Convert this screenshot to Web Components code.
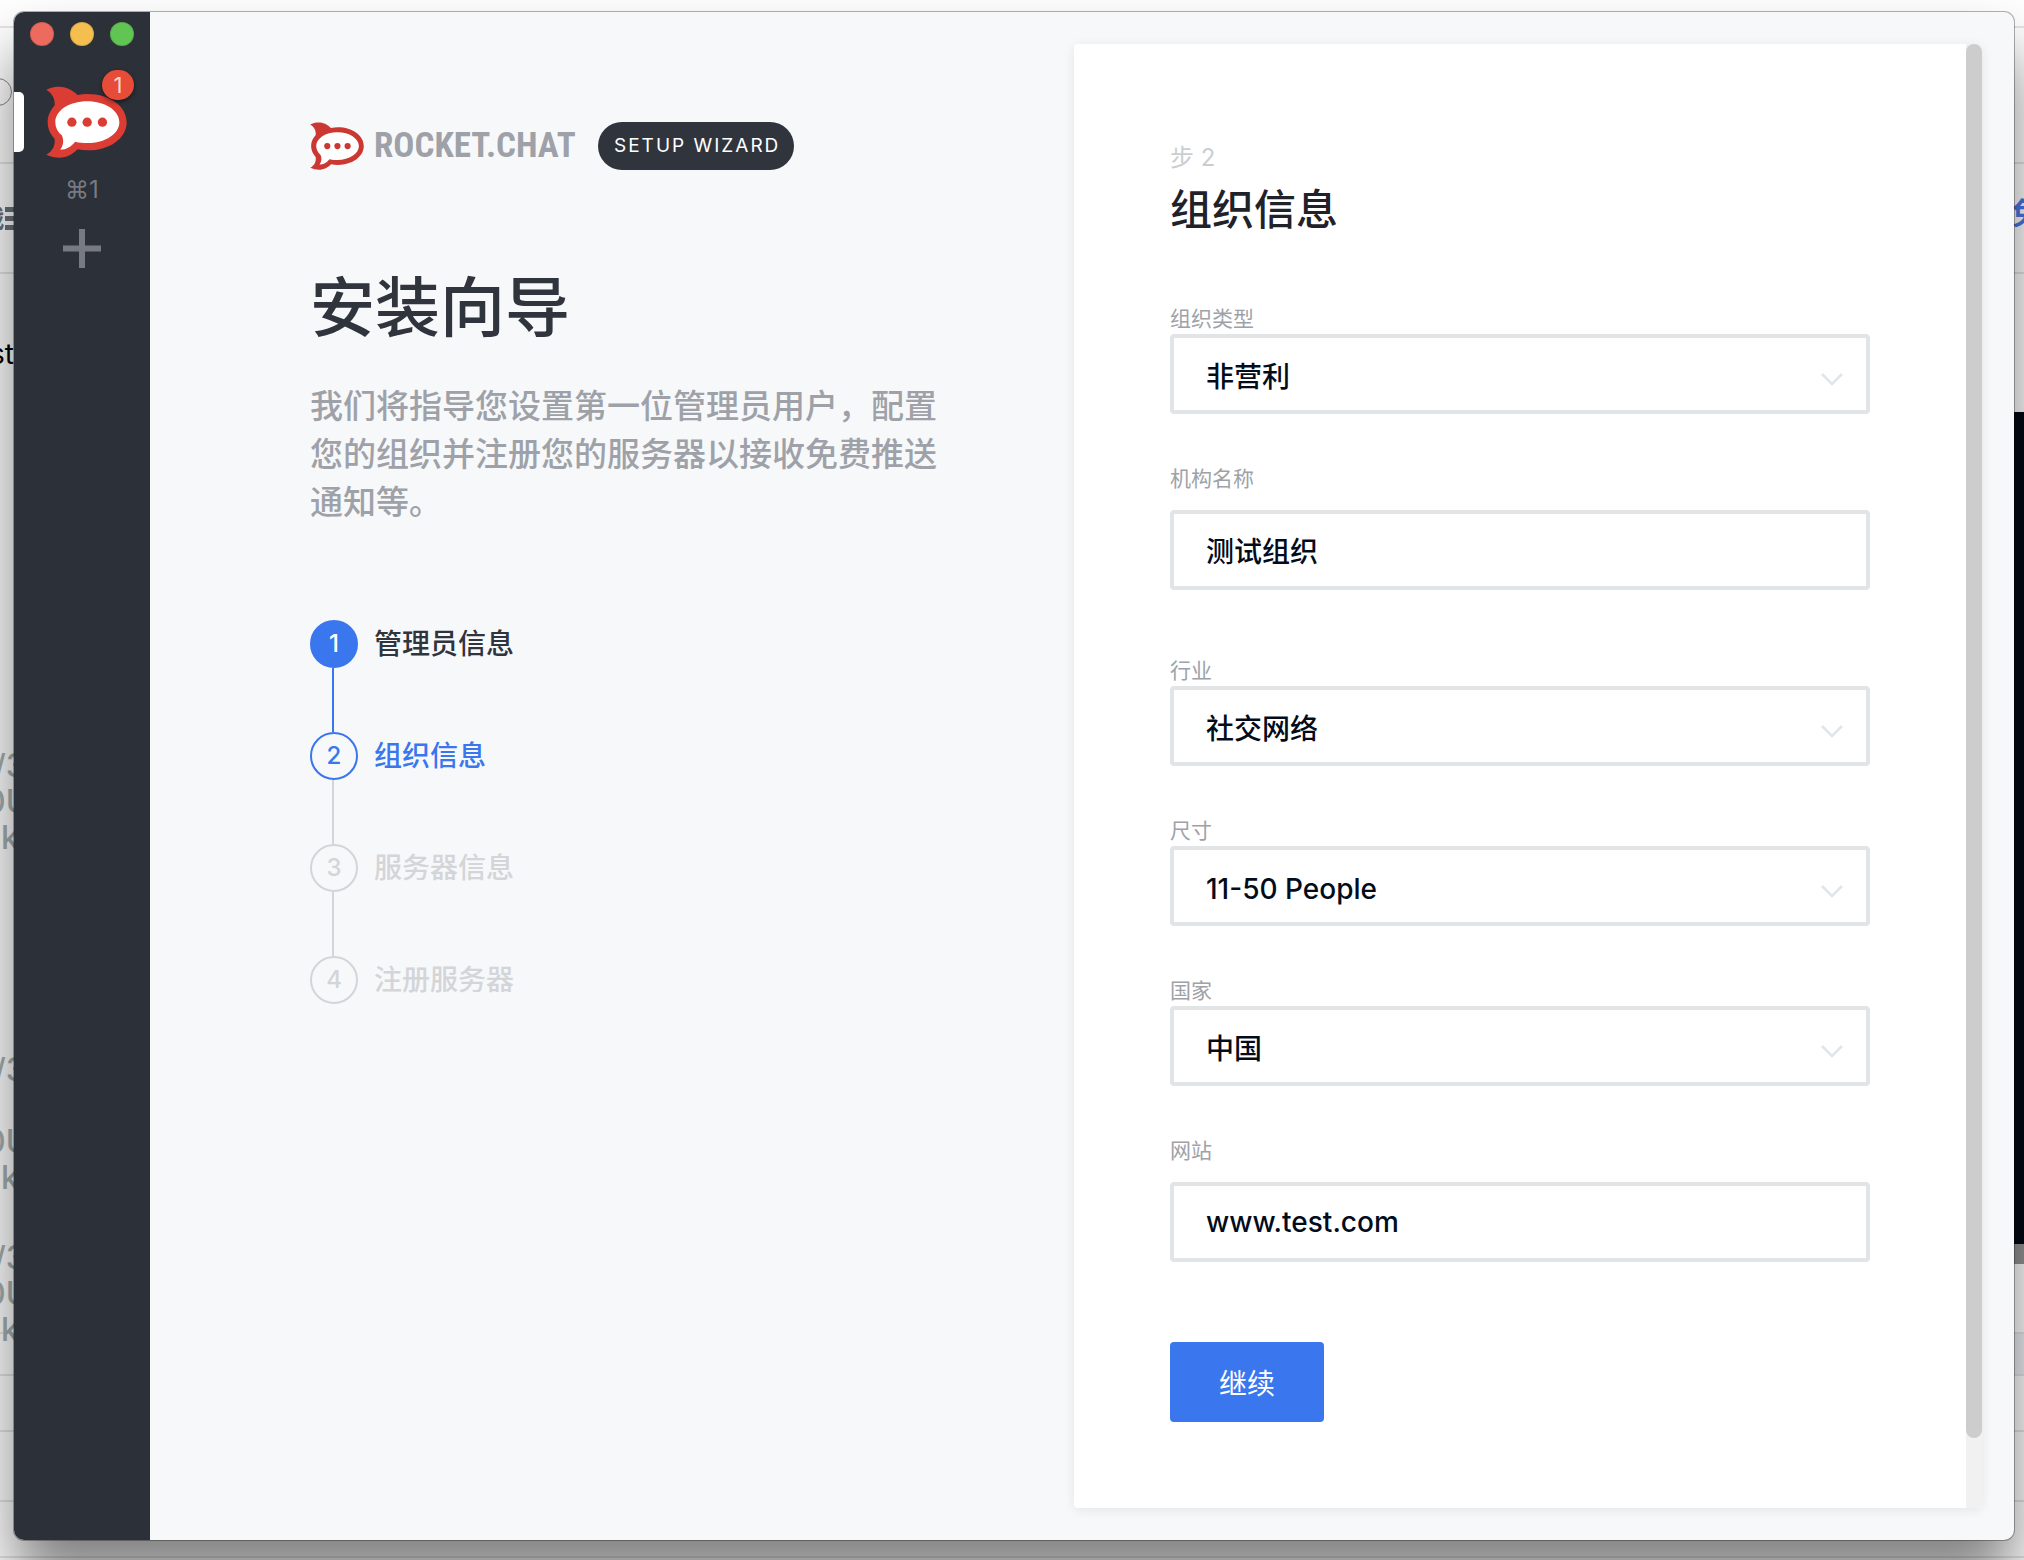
<!DOCTYPE html>
<html lang="zh-CN">
<head>
<meta charset="utf-8">
<title>Rocket.Chat</title>
<style>
  body { margin: 0; background: #fff; font-family: Inter, "Noto Sans CJK SC", sans-serif; color: #2f343d; }
</style>
</head>
<body>
<desktop-scene>
  <app-window>
    <server-bar slot="side"></server-bar>
    <wizard-intro></wizard-intro>
    <wizard-card></wizard-card>
  </app-window>
</desktop-scene>

<script>
const define = (name, html) => customElements.define(name, class extends HTMLElement {
  connectedCallback() {
    if (this.shadowRoot) return;
    const t = document.createElement('template');
    t.innerHTML = typeof html === 'function' ? html(this) : html;
    this.attachShadow({ mode: 'open' }).append(t.content.cloneNode(true));
  }
});

/* Desktop with whatever page lies behind the window */
define('desktop-scene', `
<style>
  :host { display: flex; position: relative; overflow: hidden; box-sizing: border-box; min-height: 100vh; padding: 12px 10px 20px 14px; isolation: isolate; }
  .behind { position: absolute; inset: 0; z-index: -1; overflow: hidden; }
  .behind * { position: absolute; white-space: nowrap; }
  hr { left: 0; right: 0; height: 2px; margin: 0; border: 0; background: rgba(0,0,0,.1); }
  .note { color: #a6b0b0; font-size: 32px; line-height: 36px; font-weight: 500; }
  .dark { right: 0; width: 100px; top: 412px; height: 832px; background: #030812; }
  .band { right: 0; width: 100px; top: 1244px; height: 20px; background: #949494; }
  .tint { right: 0; width: 100px; top: 1334px; height: 40px; background: #eff0f5; }
  .ring { left: -16px; top: 78px; width: 26px; height: 26px; border: 1px solid #888; border-radius: 14px; }
  .bars { left: 5px; top: 207px; width: 20px; height: 5px; background: #69727c; box-shadow: 0 9px #69727c, 0 18px #69727c; }
  .glyph { left: -20px; top: 201px; font-size: 24px; line-height: 36px; font-weight: 700; color: #69727c; }
  .st { left: -10px; top: 336px; font-size: 28px; line-height: 36px; color: #000; }
  .free { left: calc(100% - 12px); top: 193px; font-size: 30px; line-height: 40px; font-weight: 700; color: #4a78e8; }
  ::slotted(*) { flex: 1; min-width: 0; }
</style>
<div class="behind" aria-hidden="true">
  <hr style="top:26px"><hr style="top:162px"><hr style="top:272px">
  <hr style="top:1332px"><hr style="top:1374px"><hr style="top:1430px"><hr style="top:1500px"><hr style="top:1556px">
  <i class="ring"></i><i class="bars"></i>
  <span class="glyph">战</span><span class="st">st</span>
  <span class="note" style="left:-6px;top:748px">/3</span>
  <span class="note" style="left:-15px;top:784px">0U</span>
  <span class="note" style="left:1px;top:820px">k</span>
  <span class="note" style="left:-6px;top:1052px">/3</span>
  <span class="note" style="left:-15px;top:1124px">0U</span>
  <span class="note" style="left:1px;top:1160px">k</span>
  <span class="note" style="left:-6px;top:1240px">/3</span>
  <span class="note" style="left:-15px;top:1276px">0U</span>
  <span class="note" style="left:1px;top:1312px">k</span>
  <span class="free">免</span>
  <i class="dark"></i><i class="band"></i><i class="tint"></i>
</div>
<slot></slot>`);

define('app-window', `
<style>
  :host { display: flex; border-radius: 10px; background: #f7f8fa; box-shadow: 0 0 0 1px rgba(0,0,0,.3), 0 40px 60px rgba(0,0,0,.5); }
  main { flex: 1; min-width: 0; display: flex; padding: 32px 32px 32px 0; }
</style>
<slot name="side"></slot>
<main><slot></slot></main>`);

define('rocket-mark', `
<style>
  :host { display: block; color: #db3c34; }
  svg { display: block; width: 100%; height: 100%; }
</style>
<svg viewBox="136 257 244 217" preserveAspectRatio="none" aria-hidden="true">
  <path fill="currentColor" d="M137 268C152 260 166 259 176 259C200 259 216 270 231 284C242 282 252 281 262 281C328 281 379 318 379 366C379 414 328 451 262 451C252 451 242 450 231 448C217 462 200 473 176 473C163 473 150 470 137 464C156 453 164 437 162 416C149 402 141 385 141 366C141 347 149 330 162 316C164 296 155 279 137 268Z"/>
  <path fill="#fff" d="M260 303C314 303 357 331 357 366C357 401 314 429 260 429C248 429 236 428 224 425C212 440 197 449 179 449C189 435 190 421 184 406C171 395 164 382 164 366C164 331 206 303 260 303Z"/>
  <g fill="currentColor"><circle cx="214" cy="366" r="14"/><circle cx="260" cy="366" r="14"/><circle cx="306" cy="366" r="14"/></g>
</svg>`);

define('server-bar', `
<style>
  :host { display: flex; flex-direction: column; align-items: center; flex: none; width: 136px; box-sizing: border-box; padding-top: 10px; background: #2c3038; border-radius: 10px 0 0 10px; color: #777a80; }
  .lights { display: flex; gap: 16px; align-self: flex-start; margin-left: 16px; }
  .lights i { width: 24px; height: 24px; border-radius: 50%; box-shadow: inset 0 0 0 1px rgba(0,0,0,.12); }
  .server { display: flex; justify-content: center; position: relative; width: 100%; margin-top: 40px; padding: 0; border: 0; background: none; }
  .server::before { content: ""; position: absolute; left: 0; top: 6px; width: 10px; height: 60px; border-radius: 0 5px 5px 0; background: #fff; }
  rocket-mark { width: 81px; height: 72px; margin-left: 8px; }
  .badge { position: absolute; left: 88px; top: -16px; width: 32px; height: 30px; border-radius: 15px; background: #e74c38; color: #fbd3cf; font: 22px/30px Inter, sans-serif; text-align: center; box-shadow: 0 2px 4px rgba(0,0,0,.5); }
  .key { margin-top: 16px; font-size: 24px; line-height: 32px; }
  .add { margin-top: 22px; padding: 0; border: 0; background: none; color: inherit; }
  .add svg { display: block; width: 38px; height: 40px; }
</style>
<div class="lights"><i style="background:#ed6a5e"></i><i style="background:#f5bf4f"></i><i style="background:#61c554"></i></div>
<button class="server" aria-label="Rocket.Chat"><rocket-mark></rocket-mark><span class="badge">1</span></button>
<span class="key">⌘1</span>
<button class="add" aria-label="+"><svg viewBox="0 0 38 40"><path d="M19 1V40M0 20.5H38" stroke="currentColor" stroke-width="6"/></svg></button>`);

define('wizard-intro', `
<style>
  :host { display: block; flex: 1; min-width: 0; box-sizing: border-box; padding: 78px 130px 0 160px; }
  header { display: flex; align-items: center; height: 48px; }
  rocket-mark { width: 54px; height: 48px; color: #cb3731; }
  .name { margin-left: 10px; width: 200px; font: 700 35px/48px "Roboto Condensed", "Liberation Sans Narrow", "Liberation Sans", sans-serif; color: #9ea2a8; white-space: nowrap; }
  .pill { margin-left: 24px; padding: 0 14px 0 16px; border-radius: 24px; background: #2f343d; color: #fff; font-size: 19px; line-height: 48px; letter-spacing: 2px; white-space: nowrap; }
  h1 { margin: 98px 0 0; font-size: 65px; line-height: 80px; font-weight: 500; }
  p { margin: 34px 0 94px; font-size: 33px; line-height: 48px; font-weight: 500; color: #9ea2a8; }
</style>
<header><rocket-mark></rocket-mark><span class="name">ROCKET.CHAT</span><span class="pill">SETUP WIZARD</span></header>
<h1>安装向导</h1>
<p>我们将指导您设置第一位管理员用户，配置您的组织并注册您的服务器以接收免费推送通知等。</p>
<nav>
  <wizard-step number="1" state="done">管理员信息</wizard-step>
  <wizard-step number="2" state="active">组织信息</wizard-step>
  <wizard-step number="3">服务器信息</wizard-step>
  <wizard-step number="4">注册服务器</wizard-step>
</nav>`);

define('wizard-step', el => `
<style>
  :host { display: block; color: #d3d5d8; font-size: 28px; font-weight: 500; }
  .row { display: flex; align-items: center; gap: 16px; line-height: 48px; }
  .dot { box-sizing: border-box; width: 48px; height: 48px; border: 2px solid currentColor; border-radius: 50%; font-size: 24px; line-height: 44px; text-align: center; }
  :host(:not(:last-child))::after { content: ""; display: block; width: 2px; height: 64px; margin-left: 22px; background: #d3d5d8; }
  :host([state="done"])::after { background: #3a76ee !important; }
  :host([state="done"]) { color: #2f343d; }
  :host([state="done"]) .dot { background: #3a76ee; border-color: #3a76ee; color: #fff; }
  :host([state="active"]) { color: #3a76ee; }
</style>
<div class="row"><span class="dot">${el.getAttribute('number')}</span><span><slot></slot></span></div>`);

define('form-field', el => {
  const value = el.getAttribute('value');
  const select = el.getAttribute('kind') === 'select';
  return `
<style>
  :host { display: flow-root; }
  label { display: block; font-size: 21px; line-height: 30px; color: #9ea2a8; }
  .box { position: relative; }
  .box.text { margin: 16px 0; }
  input, select { display: block; appearance: none; box-sizing: border-box; width: 100%; height: 80px; margin: 0; padding: 0 32px; border: 4px solid #e1e5e8; border-radius: 4px; background: #fff; color: #030c1a; font: 500 28px/40px Inter, "Noto Sans CJK SC", sans-serif; outline: 0; }
  select { padding-top: 6px; }
  svg { position: absolute; right: 27px; top: 39px; width: 22px; height: 13px; pointer-events: none; }
</style>
<label for="f">${el.getAttribute('label')}</label>
${select
  ? `<div class="box"><select id="f"><option>${value}</option></select><svg viewBox="0 0 22 13"><path d="M1 1L11 11L21 1" fill="none" stroke="#e1e5e8" stroke-width="2.6"/></svg></div>`
  : `<div class="box text"><input id="f" type="text" value="${value}"></div>`}`;
});

define('wizard-card', `
<style>
  :host { display: flex; flex: none; width: calc(50% - 8px); border-radius: 4px; overflow: hidden; background: #fff; box-shadow: 0 2px 12px rgba(0,0,0,.08); }
  form { flex: 1; min-width: 0; padding: 96px 96px 80px; }
  small { display: block; font-size: 24px; line-height: 36px; color: #cbced1; }
  h2 { margin: 6px 0 66px; font-size: 42px; line-height: 56px; font-weight: 500; color: #1f2329; }
  .fields { display: flex; flex-direction: column; gap: 50px; }
  button { display: block; width: 154px; height: 80px; margin-top: 64px; padding: 4px 0 0; border: 0; border-radius: 4px; background: #3a76ee; color: #fff; font: 400 28px/40px Inter, "Noto Sans CJK SC", sans-serif; }
  .track { width: 16px; background: #f1f1f1; }
  .thumb { height: 95.2%; border-radius: 8px; background: #cdcdcd; }
</style>
<form onsubmit="return false">
  <small>步 2</small>
  <h2>组织信息</h2>
  <div class="fields">
    <form-field kind="select" label="组织类型" value="非营利"></form-field>
    <form-field kind="text" label="机构名称" value="测试组织"></form-field>
    <form-field kind="select" label="行业" value="社交网络"></form-field>
    <form-field kind="select" label="尺寸" value="11-50 People"></form-field>
    <form-field kind="select" label="国家" value="中国"></form-field>
    <form-field kind="text" label="网站" value="www.test.com"></form-field>
  </div>
  <button type="submit">继续</button>
</form>
<div class="track"><div class="thumb"></div></div>`);
</script>
</body>
</html>
